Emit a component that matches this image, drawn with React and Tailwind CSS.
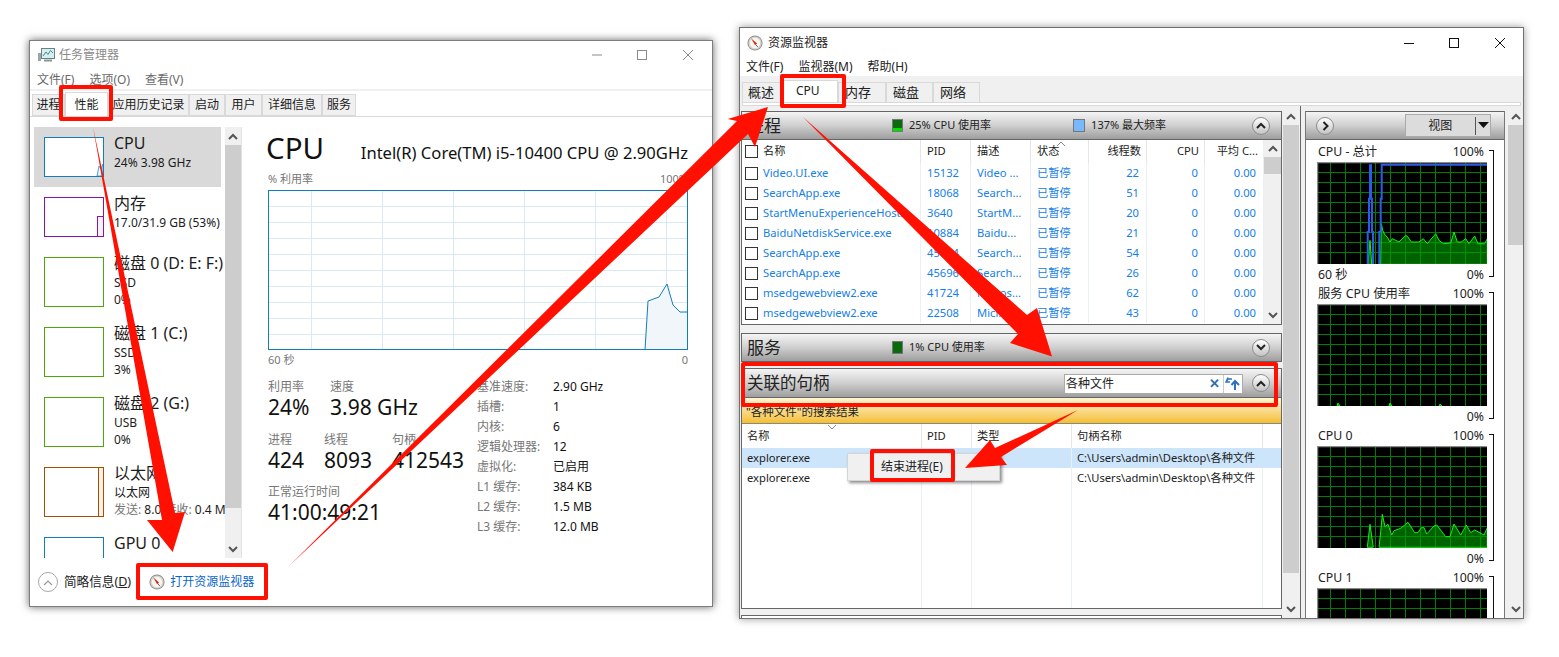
import React from 'react';

const Compass = ({ s = 16 }) => (
  <svg width={s} height={s} viewBox="0 0 16 16" className="shrink-0">
    <circle cx="8" cy="8" r="7.6" fill="#8f8f8f" />
    <circle cx="8" cy="8" r="6.6" fill="#d8d4cc" />
    <circle cx="8" cy="8" r="5.2" fill="#f8f6f0" />
    <path d="M4 3.2 L10 8.6 L8.2 10.2 Z" fill="#d3241c" />
    <path d="M8.8 9.6 L10.8 12" stroke="#666" strokeWidth="1" />
  </svg>
);

const TmIcon = () => (
  <svg width="17" height="16" viewBox="0 0 17 16" className="shrink-0">
    <rect x="0" y="6" width="3" height="8" fill="#9aa7a8" />
    <rect x="3.5" y="1.5" width="13" height="10" fill="#d7eef0" stroke="#6f7f80" />
    <path d="M5 9 L8 5 L10 7.5 L12.5 3.5 L15 6" fill="none" stroke="#3a8f9a" />
    <rect x="6" y="12.5" width="8" height="2" fill="#8a9899" />
  </svg>
);

const Chev = ({ dir = 'up', color = '#555', w = 2 }) => (
  <svg width="10" height="7" viewBox="0 0 10 7">
    <path d={dir === 'up' ? 'M1 6 L5 2 L9 6' : 'M1 1 L5 5 L9 1'} fill="none" stroke={color} strokeWidth={w} />
  </svg>
);

const Scroll = ({ thumb, btn = 'h-[17px]', cls = '' }) => (
  <div className={`flex flex-col items-stretch bg-[#f0f0f0] ${cls}`}>
    <div className={`flex items-center justify-center shrink-0 ${btn}`}><Chev /></div>
    <div className={`bg-[#cdcdcd] shrink-0 ${thumb}`} />
    <div className="flex-1" />
    <div className={`flex items-center justify-center shrink-0 ${btn}`}><Chev dir="down" /></div>
  </div>
);

const SideItem = ({ c, title, l2, l3, h, sel, children, thumbH }) => (
  <div className={`flex shrink-0 pl-[10px] ${h} ${sel ? 'bg-[#d9d9d9] mr-[4px]' : ''}`}>
    <div className={`relative mt-[10px] w-[60px] shrink-0 border bg-white overflow-hidden ${thumbH} ${c}`}>{children}</div>
    <div className="ml-[10px] mt-[5px] whitespace-nowrap overflow-hidden text-[#1c1c1c]">
      <div className="text-[16px] leading-[22px]">{title}</div>
      <div className="text-[12px] leading-[17px]">{l2}</div>
      {l3 && <div className="text-[12px] leading-[17px]">{l3}</div>}
    </div>
  </div>
);

const TaskManager = () => (
  <div className="absolute left-[29px] top-[40px] w-[684px] h-[567px] bg-white border border-[#7d7d7d] shadow-[0_0_8px_rgba(0,0,0,0.6)] flex flex-col overflow-hidden">
    <div className="h-[28px] flex items-center pl-[8px] shrink-0 relative">
      <TmIcon />
      <span className="ml-[4px] text-[12px] text-[#8a8a8a]">任务管理器</span>
      <svg width="102" height="14" viewBox="0 0 102 14" className="ml-auto mr-[18px]">
        <path d="M0 7 H10" stroke="#8a8a8a" />
        <rect x="45.5" y="2.5" width="9" height="9" fill="none" stroke="#8a8a8a" />
        <path d="M91 2 L101 12 M101 2 L91 12" stroke="#8a8a8a" />
      </svg>
    </div>
    <div className="h-[20px] flex items-center gap-[15px] pl-[7px] pt-[2px] text-[12px] text-[#6a6a6a] shrink-0">
      <span>文件(F)</span><span>选项(O)</span><span>查看(V)</span>
    </div>
    <div className="h-[5px] border-t-2 border-[#f0f0f0] shrink-0" />
    <div className="h-[23px] flex pl-[2px] border-b border-[#d9d9d9] text-[12px] text-[#1c1c1c] shrink-0">
      <div className="w-[33px] bg-[#f0f0f0] border border-[#d9d9d9] flex items-center justify-center">进程</div>
      <div className="w-[43px] bg-white border border-[#d9d9d9] border-b-0 flex items-center justify-center -mt-[2px]">性能</div>
      <div className="w-[81px] bg-[#f0f0f0] border border-[#d9d9d9] flex items-center justify-center">应用历史记录</div>
      <div className="w-[36px] bg-[#f0f0f0] border border-[#d9d9d9] flex items-center justify-center">启动</div>
      <div className="w-[37px] bg-[#f0f0f0] border border-[#d9d9d9] flex items-center justify-center">用户</div>
      <div className="w-[60px] bg-[#f0f0f0] border border-[#d9d9d9] flex items-center justify-center">详细信息</div>
      <div className="w-[34px] bg-[#f0f0f0] border border-[#d9d9d9] flex items-center justify-center">服务</div>
    </div>
    <div className="flex flex-1 min-h-0 pt-[10px]">
      <div className="ml-[4px] w-[191px] flex flex-col overflow-hidden shrink-0">
        <SideItem sel h="h-[60px]" thumbH="h-[40px]" c="border-[#117dbb]" title="CPU" l2="24%  3.98 GHz">
          <svg className="absolute inset-0" width="58" height="38" viewBox="0 0 58 38"><path d="M52 38 L54 28 L56 31 L58 26 V38 Z" fill="#eaf3f9" stroke="#117dbb" strokeWidth="0.7" /></svg>
        </SideItem>
        <SideItem h="h-[60px]" thumbH="h-[40px]" c="border-[#8b12ae]" title="内存" l2="17.0/31.9 GB (53%)">
          <div className="absolute right-0 bottom-0 w-[6px] h-[20px] bg-[#f4f2f4] border-l border-t border-[#8b12ae]" />
        </SideItem>
        <SideItem h="h-[70px]" thumbH="h-[50px]" c="border-[#4da60c]" title="磁盘 0 (D: E: F:)" l2="SSD" l3="0%" />
        <SideItem h="h-[70px]" thumbH="h-[50px]" c="border-[#4da60c]" title="磁盘 1 (C:)" l2="SSD" l3="3%" />
        <SideItem h="h-[70px]" thumbH="h-[50px]" c="border-[#4da60c]" title="磁盘 2 (G:)" l2="USB" l3="0%" />
        <SideItem h="h-[70px]" thumbH="h-[50px]" c="border-[#a74f01]" title="以太网" l2="以太网" l3={<span><span className="text-[#777]">发送: </span>8.0 <span className="text-[#777]">接收: </span>0.4 Mbps</span>}>
          <div className="absolute right-0 top-0 bottom-0 w-[5px] bg-[#fbf0e6] border-l border-[#a74f01]" />
        </SideItem>
        <SideItem h="h-[70px]" thumbH="h-[50px]" c="border-[#117dbb]" title="GPU 0" l2="NVIDIA 0 %" />
      </div>
      <Scroll cls="w-[16px] shrink-0" btn="h-[18px]" thumb="h-[363px]" />
      <div className="w-px bg-[#e3e3e3] shrink-0" />
      <div className="ml-[24px] w-[422px] flex flex-col shrink-0">
        <div className="h-[45px] flex items-center justify-between text-[#111]">
          <span className="text-[29.5px] leading-none -mt-[3px]">CPU</span>
          <span className="text-[16.6px] mt-[8px] whitespace-nowrap">Intel(R) Core(TM) i5-10400 CPU @ 2.90GHz</span>
        </div>
        <div className="h-[18px] pl-[2px] pb-[3px] flex items-center justify-between text-[11px] text-[#777]"><span>% 利用率</span><span>100%</span></div>
        <svg width="420" height="160" viewBox="0 0 420 160" className="ml-[2px] shrink-0">
          {[16, 32, 48, 64, 80, 96, 112, 128, 144].map(y => <line key={y} x1="0" x2="420" y1={y + .5} y2={y + .5} stroke="#d9eaf4" />)}
          {[43, 114, 185, 256, 327, 398].map(x => <line key={x} y1="0" y2="160" x1={x + .5} x2={x + .5} stroke="#d9eaf4" />)}
          <path d="M377 160 L380 111 L391 107 L399 94 L405 115 L412 122 L420 122 V160 Z" fill="#f1f6fa" stroke="#117dbb" />
          <rect x=".5" y=".5" width="419" height="159" fill="none" stroke="#117dbb" />
        </svg>
        <div className="h-[20px] pl-[2px] flex items-center justify-between text-[11px] text-[#777]"><span>60 秒</span><span>0</span></div>
        <div className="flex mt-[7px] pl-[2px]">
          <div className="w-[209px] shrink-0 text-[#111]">
            <div className="grid grid-cols-[62px_1fr] text-[12px] text-[#777] leading-[20px]"><span>利用率</span><span>速度</span></div>
            <div className="grid grid-cols-[62px_1fr] text-[21px] leading-[24px] -mt-[2px] whitespace-nowrap"><span>24%</span><span>3.98 GHz</span></div>
            <div className="grid grid-cols-[56px_68px_1fr] mt-[11px] text-[12px] text-[#777] leading-[20px]"><span>进程</span><span>线程</span><span>句柄</span></div>
            <div className="grid grid-cols-[56px_68px_1fr] text-[21px] leading-[24px] -mt-[2px]"><span>424</span><span>8093</span><span>412543</span></div>
            <div className="mt-[10px] text-[12px] text-[#777] leading-[20px]">正常运行时间</div>
            <div className="text-[21px] leading-[24px] -mt-[2px] whitespace-nowrap">41:00:49:21</div>
          </div>
          <div className="grid grid-cols-[76px_1fr] text-[12px] leading-[20px] auto-rows-[20px] text-[#111]">
            {[['基准速度:', '2.90 GHz'], ['插槽:', '1'], ['内核:', '6'], ['逻辑处理器:', '12'], ['虚拟化:', '已启用'], ['L1 缓存:', '384 KB'], ['L2 缓存:', '1.5 MB'], ['L3 缓存:', '12.0 MB']].map(([a, b]) => (
              <React.Fragment key={a}><span className="text-[#777]">{a}</span><span>{b}</span></React.Fragment>
            ))}
          </div>
        </div>
      </div>
    </div>
    <div className="h-[48px] flex items-center pl-[8px] shrink-0 bg-white">
      <div className="w-[20px] h-[20px] rounded-full border border-[#a8a8a8] flex items-center justify-center"><Chev color="#999" w={1.2} /></div>
      <span className="ml-[6px] text-[12.6px] text-[#222]">简略信息(<span className="underline">D</span>)</span>
      <div className="ml-[8px] w-px h-[18px] bg-[#bbb]" />
      <div className="ml-[9px]"><Compass /></div>
      <span className="ml-[5px] text-[12px] text-[#0a66c8]">打开资源监视器</span>
    </div>
  </div>
);

const Round = ({ dir = 'up' }) => (
  <div className="w-[18px] h-[18px] rounded-full border border-[#8c8c8c] bg-linear-to-b from-white to-[#c4c4c4] flex items-center justify-center shrink-0">
    {dir === 'right'
      ? <svg width="7" height="10" viewBox="0 0 7 10"><path d="M1.5 1 L5.5 5 L1.5 9" fill="none" stroke="#222" strokeWidth="2" /></svg>
      : <Chev dir={dir} color="#222" w={2} />}
  </div>
);

const Head = ({ children, cls = 'h-[29px]' }) => (
  <div className={`flex items-center shrink-0 border border-[#666] bg-linear-to-b from-[#f5f5f5] via-[#cfcfcf] to-[#9e9e9e] ${cls}`}>{children}</div>
);

const GreenMeter = ({ fill }) => (
  <div className="relative w-[11px] h-[13px] border border-[#777] bg-[#0b6a0b] bg-[radial-gradient(#041f04_35%,transparent_40%)] bg-[length:2px_2px]">
    {fill && <div className="absolute bottom-0 inset-x-0 h-[3px] bg-[#00e000]" />}
  </div>
);

const cols = 'grid grid-cols-[178px_50px_60px_58px_58px_58px_59px]';
const rows = [
  ['Video.UI.exe', '15132', 'Video ...', '22'],
  ['SearchApp.exe', '18068', 'Search...', '51'],
  ['StartMenuExperienceHost...', '3640', 'StartM...', '20'],
  ['BaiduNetdiskService.exe', '10884', 'Baidu...', '21'],
  ['SearchApp.exe', '45064', 'Search...', '54'],
  ['SearchApp.exe', '45696', 'Search...', '26'],
  ['msedgewebview2.exe', '41724', 'Micros...', '62'],
  ['msedgewebview2.exe', '22508', 'Micr...', '43'],
];
const Box = () => <span className="inline-block w-[13px] h-[13px] border border-[#333] bg-white shrink-0" />;

const line = 'border-l border-[#e8eff7]';
const ProcessTable = () => (
  <div className="flex h-[185px] border-x border-b border-[#666] bg-white shrink-0 text-[11.2px]">
    <div className="w-[521px] shrink-0">
      <div className={`${cols} h-[23px] items-stretch text-[#222]`}>
        <div className="flex items-center pl-[3px] gap-[5px]"><Box /><span>名称</span></div>
        <div className="flex items-center pl-[6px] border-l border-[#e5e5e5]">PID</div>
        <div className="flex items-center pl-[6px] border-l border-[#e5e5e5]">描述</div>
        <div className="relative flex items-center pl-[6px] border-l border-[#e5e5e5]">状态
          <span className="absolute left-[25px] top-0"><Chev color="#888" w={1} /></span>
        </div>
        <div className="flex items-center justify-end pr-[5px] border-l border-[#e5e5e5]">线程数</div>
        <div className="flex items-center justify-end pr-[5px] border-l border-[#e5e5e5]">CPU</div>
        <div className="flex items-center justify-end pr-[5px] border-l border-[#e5e5e5]">平均 C...</div>
      </div>
      {rows.map((r, i) => (
        <div key={i} className={`${cols} h-[20px] items-stretch text-[#1580e6]`}>
          <div className="flex items-center pl-[3px] gap-[5px] whitespace-nowrap overflow-hidden"><Box /><span>{r[0]}</span></div>
          <div className={`flex items-center pl-[6px] ${line}`}>{r[1]}</div>
          <div className={`flex items-center pl-[6px] ${line} whitespace-nowrap overflow-hidden`}>{r[2]}</div>
          <div className={`flex items-center pl-[6px] ${line}`}>已暂停</div>
          <div className={`flex items-center justify-end pr-[7px] ${line}`}>{r[3]}</div>
          <div className={`flex items-center justify-end pr-[6px] ${line}`}>0</div>
          <div className={`flex items-center justify-end pr-[7px] ${line}`}>0.00</div>
        </div>
      ))}
    </div>
    <div className="w-px bg-[#e8eff7] shrink-0" />
    <Scroll cls="w-[17px] shrink-0" thumb="h-[17px]" />
  </div>
);

const hcols = 'grid grid-cols-[179px_50px_100px_192px]';
const HandleTable = () => (
  <div className="flex-1 min-h-0 border-x border-b border-[#666] bg-white text-[11.2px] text-[#222] flex flex-col">
    <div className={`${hcols} h-[25px] items-stretch shrink-0 border-t border-[#888]`}>
      <div className="relative flex items-center pl-[5px]">名称<span className="absolute left-[85px] top-0"><Chev dir="down" color="#888" w={1} /></span></div>
      <div className="flex items-center pl-[5px] border-l border-[#e5e5e5]">PID</div>
      <div className="flex items-center pl-[5px] border-l border-[#e5e5e5]">类型</div>
      <div className="flex items-center pl-[5px] border-l border-[#e5e5e5] border-r">句柄名称</div>
    </div>
    <div className={`${hcols} h-[20px] items-stretch shrink-0 bg-[#cce5fb]`}>
      <div className="flex items-center pl-[5px]">explorer.exe</div><div /><div />
      <div className={`flex items-center pl-[5px] ${line} whitespace-nowrap`}>C:\Users\admin\Desktop\各种文件</div>
    </div>
    <div className={`${hcols} h-[20px] items-stretch shrink-0`}>
      <div className="flex items-center pl-[5px]">explorer.exe</div><div className={line} /><div className={line} />
      <div className={`flex items-center pl-[5px] ${line} whitespace-nowrap border-r border-r-[#e8eff7]`}>C:\Users\admin\Desktop\各种文件</div>
    </div>
    <div className={`${hcols} flex-1 items-stretch`}>
      <div /><div className={line} /><div className={line} /><div className={`${line} border-r border-r-[#e8eff7]`} />
    </div>
  </div>
);

const GRAPH_V = [13, 28, 43, 58, 73, 88, 103, 118, 133, 148, 163];
const GRAPH_H = [10, 20, 30, 40, 50, 60, 70, 80, 90];
const scale = (arr, ox, oy) => arr.map(([x, y]) => `${((x - ox) / 3).toFixed(1)},${((y - oy) / 3).toFixed(1)}`).join(' ');
const total = scale([[270, 722], [272, 600], [276, 620], [283, 635], [290, 640], [298, 655], [305, 645], [315, 650], [325, 655], [345, 635], [352, 640], [362, 655], [385, 655], [398, 645], [410, 660], [435, 630], [445, 650], [458, 660], [480, 658], [490, 625], [500, 655], [512, 655], [525, 645], [535, 660], [552, 637], [562, 660], [582, 660], [590, 645], [590, 722]], 79, 415);
const totalL = scale([[232, 722], [238, 650], [243, 722]], 79, 415);
const cpu0 = scale([[265, 387], [270, 340], [275, 288], [283, 325], [292, 318], [303, 350], [310, 337], [330, 330], [352, 312], [372, 343], [382, 343], [392, 328], [400, 328], [408, 347], [430, 323], [438, 320], [465, 355], [478, 355], [490, 317], [510, 350], [527, 320], [540, 343], [552, 335], [580, 350], [590, 328], [590, 387]], 79, 83);
const cpu0L = scale([[230, 387], [238, 318], [248, 387]], 79, 83);
const blue = scale([[231, 722], [231, 625], [235, 625], [235, 525], [238, 525], [238, 425], [241, 425], [241, 525], [244, 525], [244, 625], [247, 625], [247, 722]], 79, 415);
const blue2 = scale([[266, 722], [266, 625], [270, 625], [270, 525], [273, 525], [273, 423], [590, 423]], 79, 415);

const Graph = ({ polys = [], blues = [] }) => (
  <svg width="170" height="102" viewBox="0 0 170 102" className="block shrink-0">
    <rect width="170" height="102" fill="#000" />
    {GRAPH_H.map(y => <line key={y} x1="0" x2="170" y1={y + .5} y2={y + .5} stroke="#007e00" />)}
    {GRAPH_V.map(x => <line key={x} y1="0" y2="102" x1={x + .5} x2={x + .5} stroke="#007e00" />)}
    {polys.map((p, i) => <polygon key={i} points={p} fill="#00a000" fillOpacity="0.62" stroke="#14f014" strokeWidth="1" />)}
    {blues.map((p, i) => <polyline key={i} points={p} fill="none" stroke="#2b5ee8" strokeWidth="2" />)}
    <path d="M.5 102 V.5 H170" fill="none" stroke="#8a8a8a" strokeWidth="1.5" />
  </svg>
);

const Module = ({ title, foot, polys, blues }) => (
  <div className="flex h-[142px] shrink-0 pl-[11px]">
    <div className="w-[170px] shrink-0">
      <div className="h-[22px] flex items-center justify-between pt-[3px] pl-[1px] pr-[3px] text-[12.3px] text-[#222]"><span>{title}</span><span>100%</span></div>
      <Graph polys={polys} blues={blues} />
      <div className="h-[18px] flex items-center justify-between pt-[5px] pl-[1px] pr-[3px] text-[12.3px] text-[#222]"><span>{foot}</span><span>0%</span></div>
    </div>
    <div className="ml-[2px] mt-[10px] h-[127px] w-[5px] border-t-[1.5px] border-r-[1.5px] border-b-[1.5px] border-[#111]" />
  </div>
);

const ResMon = () => (
  <div className="absolute left-[739px] top-[27px] w-[785px] h-[592px] bg-[#f0f0f0] border border-[#707070] shadow-[0_0_8px_rgba(0,0,0,0.4)] flex flex-col overflow-hidden">
    <div className="h-[28px] bg-white flex items-center pl-[7px] pt-[1px] shrink-0">
      <Compass />
      <span className="ml-[5px] text-[12px] text-[#222]">资源监视器</span>
      <svg width="102" height="14" viewBox="0 0 102 14" className="ml-auto mr-[17px]">
        <path d="M0 7.5 H10" stroke="#111" />
        <rect x="45.5" y="2.5" width="9" height="9" fill="none" stroke="#111" />
        <path d="M91 2 L101 12 M101 2 L91 12" stroke="#111" />
      </svg>
    </div>
    <div className="h-[20px] bg-white flex items-center pl-[6px] pt-[2px] gap-[15px] text-[12px] text-[#222] shrink-0">
      <span>文件(F)</span><span>监视器(M)</span><span>帮助(H)</span>
    </div>
    <div className="h-[26px] pt-[6px] pl-[2px] flex items-stretch text-[13px] text-[#222] shrink-0">
      <div className="w-[40px] bg-[#f0f0f0] border border-[#d9d9d9] border-b-0 flex items-center pl-[5px]">概述</div>
      <div className="w-[56px] bg-white border border-[#d9d9d9] border-b-0 -mt-[2px] flex items-center pl-[13px] text-[12px] pb-[2px]">CPU</div>
      <div className="w-[48px] bg-[#f0f0f0] border border-[#d9d9d9] border-b-0 flex items-center pl-[6px]">内存</div>
      <div className="w-[47px] bg-[#f0f0f0] border border-[#d9d9d9] border-b-0 flex items-center pl-[6px]">磁盘</div>
      <div className="w-[47px] bg-[#f0f0f0] border border-[#d9d9d9] border-b-0 flex items-center pl-[6px]">网络</div>
    </div>
    <div className="h-[4px] mx-[2px] bg-white border border-[#d9d9d9] shrink-0" />
    <div className="flex flex-1 min-h-0 pt-[5px]">
      <div className="ml-[1px] w-[541px] shrink-0 flex flex-col">
        <Head>
          <span className="ml-[5px] text-[17px] text-[#222]">进程</span>
          <span className="ml-[111px]"><GreenMeter fill /></span>
          <span className="ml-[6px] text-[11px] text-[#222]">25% CPU 使用率</span>
          <span className="ml-[82px] w-[12px] h-[13px] border border-[#777] bg-[#78b8ff]" />
          <span className="ml-[6px] text-[11px] text-[#222]">137% 最大频率</span>
          <span className="ml-auto mr-[11px]"><Round /></span>
        </Head>
        <ProcessTable />
        <div className="h-[8px] shrink-0" />
        <Head>
          <span className="ml-[5px] text-[17px] text-[#222]">服务</span>
          <span className="ml-[111px]"><GreenMeter /></span>
          <span className="ml-[6px] text-[11px] text-[#222]">1% CPU 使用率</span>
          <span className="ml-auto mr-[11px]"><Round dir="down" /></span>
        </Head>
        <div className="h-[6px] shrink-0" />
        <Head cls="h-[30px]">
          <span className="ml-[5px] text-[16.5px] text-[#222]">关联的句柄</span>
          <div className="ml-auto mt-[1px] w-[179px] h-[20px] bg-white border border-[#aaa] flex items-center text-[12px] text-[#222] pl-[1px]">
            <span>各种文件</span>
            <span className="ml-auto text-[#2e6fb0] text-[13px] font-bold leading-none">✕</span>
            <div className="ml-[3px] w-px h-full bg-[#ccc]" />
            <svg width="16" height="14" viewBox="0 0 16 14" className="mx-[1px]">
              <path d="M7 2 H3 L1 5 M3 0.5 L1 5 L5 5" fill="none" stroke="#2e72bd" strokeWidth="1.4" />
              <path d="M10 13 V5 M6.5 8 L10 4 L14 8" fill="none" stroke="#2e72bd" strokeWidth="2" />
            </svg>
          </div>
          <span className="ml-[9px] mr-[11px]"><Round /></span>
        </Head>
        <div className="h-[25px] shrink-0 bg-linear-to-b from-[#fdf5d0] to-[#f5bf27] border-x border-[#666] flex items-center pl-[4px] pt-[2px] text-[11.5px] text-[#222]">"各种文件"的搜索结果</div>
        <HandleTable />
        <div className="h-[6px] shrink-0" />
        <div className="h-[3px] shrink-0 border-t border-x border-[#666] bg-white" />
      </div>
      <Scroll cls="w-[16px] ml-[1px] shrink-0 -mt-[3px]" thumb="h-[448px]" />
      <div className="w-px bg-[#666] ml-[1px] shrink-0 -mt-[5px]" />
      <div className="ml-[4px] w-[200px] shrink-0 flex flex-col bg-white border-x border-[#777] overflow-hidden">
        <div className="-mx-px">
          <Head>
            <span className="ml-[10px]"><Round dir="right" /></span>
            <div className="ml-[71px] w-[86px] h-[23px] bg-[#dcdcdc] border border-[#aaa] flex items-center text-[12px] text-[#222]">
              <span className="w-[69px] text-center">视图</span>
              <div className="w-[1.5px] h-[18px] bg-[#555]" />
              <svg width="12" height="7" viewBox="0 0 12 7" className="ml-[2px]"><path d="M0 0 H11 L5.5 6 Z" fill="#111" /></svg>
            </div>
          </Head>
        </div>
        <Module title="CPU - 总计" foot="60 秒" polys={[total, totalL]} blues={[blue, blue2]} />
        <Module title="服务 CPU 使用率" foot="" polys={[`20,102 21,99 23,102`, `72,102 73,99 75,102`, `122,102 123,100 125,102`]} />
        <Module title="CPU 0" foot="" polys={[cpu0, cpu0L]} />
        <Module title="CPU 1" foot="" />
      </div>
      <Scroll cls="w-[16px] ml-[3px] shrink-0 -mt-[3px]" thumb="h-[120px]" />
    </div>
  </div>
);

const Ring = ({ cls }) => <div className={`absolute border-[4px] border-[#ff1000] rounded-[2px] pointer-events-none ${cls}`} />;

export default function App() {
  return (
    <div className="relative w-[1559px] h-[657px] bg-white overflow-hidden [font-family:'Noto_Sans','Noto_Sans_CJK_SC',sans-serif]">
      <TaskManager />
      <ResMon />
      <div className="absolute left-[847px] top-[453px] w-[153px] h-[28px] bg-[#f0f0f0] border border-[#d5d5d5] shadow-[2px_2px_3px_rgba(0,0,0,0.45)] flex items-center pl-[33px] text-[12px] text-[#222]">结束进程(E)</div>
      <Ring cls="left-[59px] top-[85px] w-[54px] h-[36px]" />
      <Ring cls="left-[136px] top-[563px] w-[132px] h-[37px]" />
      <Ring cls="left-[780px] top-[74px] w-[66px] h-[34px]" />
      <Ring cls="left-[741px] top-[362px] w-[537px] h-[45px]" />
      <Ring cls="left-[870px] top-[449px] w-[85px] h-[33px]" />
      <svg className="absolute left-0 top-0 pointer-events-none" width="1559" height="657" viewBox="0 0 1559 657">
        <polygon fill="#ff1000" points="93,127 175,513 185,512 172.7,552 147,520 162,520" />
        <polygon fill="#ff1000" points="288,567 737,121 727.7,119 768,107 755,147 748,134" />
        <polygon fill="#ff1000" points="803,117 1027,315 1037,308 1052,356.5 1010,343 1018,334" />
        <polygon fill="#ff1000" points="1078,410 995,448 990,440 965,468 1007,465 1001,457" />
      </svg>
    </div>
  );
}
